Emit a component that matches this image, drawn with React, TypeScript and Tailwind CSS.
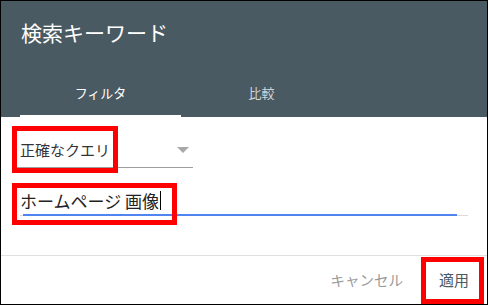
import React from "react";

export default function App() {
  return (
    <div className="relative w-[488px] h-[305px] border border-black bg-white flex flex-col font-['Noto_Sans_CJK_JP','Noto_Sans',sans-serif] overflow-hidden">
      {/* Header */}
      <div className="h-[116px] bg-[#4a5a63] flex flex-col shrink-0">
        <div className="pl-[20px] pt-[17px] text-[21px] leading-[28px] text-white">検索キーワード</div>
        <div className="mt-auto flex pl-[19px]">
          <div className="w-[161px] h-[48px] flex items-center justify-center text-[13px] text-white border-b-2 border-white pt-[2px]">
            フィルタ
          </div>
          <div className="w-[161px] h-[48px] flex items-center justify-center text-[13px] text-white/75">
            比較
          </div>
        </div>
      </div>

      {/* Body */}
      <div className="flex flex-col pl-[16px] pt-[15px]">
        <div className="w-[176px] h-[36px] border-b border-[#9e9e9e] flex items-center justify-between pl-[3px] pr-[4px]">
          <span className="text-[15px] text-[#333] leading-none">正確なクエリ</span>
          <svg width="12" height="6" viewBox="0 0 12 6">
            <path d="M0 0 L12 0 L6 6 Z" fill="#a8a8a8" />
          </svg>
        </div>
        <div className="ml-[3px] mt-[16px] w-[448px] relative h-[32px] flex items-center">
          <span className="text-[17px] text-[#222] leading-none">ホームページ 画像</span>
          <span className="w-px h-[19px] bg-black ml-[1px]" />
          <div className="absolute left-0 right-0 bottom-0 h-px bg-[#dcdcdc]" />
          <div className="absolute left-[3px] right-[11px] bottom-0 h-[2px] bg-[#5084f0]" />
        </div>
      </div>

      <div className="mt-auto border-t border-[#e0e0e0] h-[49px] flex items-center justify-end pr-[18px]">
        <span className="text-[14.5px] text-[#9a9a9a] mr-[36px]">キャンセル</span>
        <span className="text-[15px] text-[#4a5a63]">適用</span>
      </div>

      {/* Red annotation boxes */}
      <div className="absolute left-[11px] top-[125px] w-[106px] h-[47px] border-[5px] border-[#ff0000]" />
      <div className="absolute left-[11px] top-[182px] w-[165px] h-[42px] border-[5px] border-[#ff0000]" />
      <div className="absolute left-[420px] top-[256px] w-[63px] h-[47px] border-[5px] border-[#ff0000]" />
    </div>
  );
}
